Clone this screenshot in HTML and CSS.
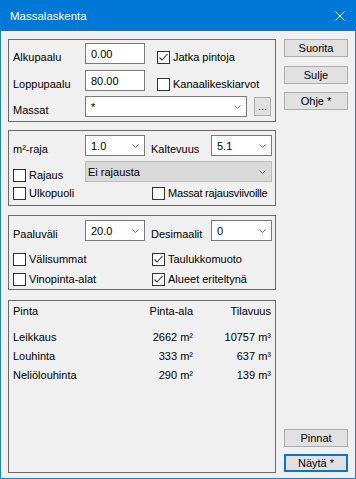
FILE: index.html
```html
<!DOCTYPE html>
<html lang="fi">
<head>
  <meta charset="UTF-8" />
  <meta name="viewport" content="width=device-width, initial-scale=1.0" />
  <title>Massalaskenta</title>
  <link rel="stylesheet" href="styles.css">
</head>
<body>
  <div class="window">
    <div class="titlebar">
      <span class="title">Massalaskenta</span>
      <svg class="close" width="10" height="10" viewBox="0 0 10 10"><path d="M0.5 0.5L9.5 9.5M9.5 0.5L0.5 9.5" stroke="#fff" stroke-width="1" fill="none"/></svg>
    </div>
    <div class="client">
      <div class="groups">
        <section class="group g1">
          <div class="row">
            <span class="lbl">Alkupaalu</span>
            <div class="edit w60">0.00</div>
            <label class="check ml12"><span class="box"><svg width="11" height="11" viewBox="0 0 11 11"><polyline points="1.5,5.5 4,8 9.5,2" /></svg></span>Jatka pintoja</label>
          </div>
          <div class="row mt6">
            <span class="lbl">Loppupaalu</span>
            <div class="edit w60">80.00</div>
            <label class="check ml12"><span class="box"></span>Kanaalikeskiarvot</label>
          </div>
          <div class="row mt5">
            <span class="lbl">Massat</span>
            <div class="combo w162"><span>*</span><svg class="arrow" width="7" height="4" viewBox="0 0 7 4"><polyline points="0.5,0.5 3.5,3.5 6.5,0.5" /></svg></div>
            <div class="dots">...</div>
          </div>
        </section>

        <section class="group g2">
          <div class="row">
            <span class="lbl">m²-raja</span>
            <div class="combo w60"><span>1.0</span><svg class="arrow" width="7" height="4" viewBox="0 0 7 4"><polyline points="0.5,0.5 3.5,3.5 6.5,0.5" /></svg></div>
            <span class="lbl lbl2">Kaltevuus</span>
            <div class="combo w61"><span>5.1</span><svg class="arrow" width="7" height="4" viewBox="0 0 7 4"><polyline points="0.5,0.5 3.5,3.5 6.5,0.5" /></svg></div>
          </div>
          <div class="row mt5">
            <label class="check col1"><span class="box"></span>Rajaus</label>
            <div class="combo disabled w187"><span>Ei rajausta</span><svg class="arrow" width="7" height="4" viewBox="0 0 7 4"><polyline points="0.5,0.5 3.5,3.5 6.5,0.5" /></svg></div>
          </div>
          <div class="row short mt5">
            <label class="check colwide"><span class="box"></span>Ulkopuoli</label>
            <label class="check tight"><span class="box"></span>Massat rajausviivoille</label>
          </div>
        </section>

        <section class="group g3">
          <div class="row">
            <span class="lbl">Paaluväli</span>
            <div class="combo w60"><span>20.0</span><svg class="arrow" width="7" height="4" viewBox="0 0 7 4"><polyline points="0.5,0.5 3.5,3.5 6.5,0.5" /></svg></div>
            <span class="lbl lbl2">Desimaalit</span>
            <div class="combo w61"><span>0</span><svg class="arrow" width="7" height="4" viewBox="0 0 7 4"><polyline points="0.5,0.5 3.5,3.5 6.5,0.5" /></svg></div>
          </div>
          <div class="row short mt12">
            <label class="check colwide"><span class="box"></span>Välisummat</label>
            <label class="check"><span class="box"><svg width="11" height="11" viewBox="0 0 11 11"><polyline points="1.5,5.5 4,8 9.5,2" /></svg></span>Taulukkomuoto</label>
          </div>
          <div class="row short mt7">
            <label class="check colwide"><span class="box"></span>Vinopinta-alat</label>
            <label class="check"><span class="box"><svg width="11" height="11" viewBox="0 0 11 11"><polyline points="1.5,5.5 4,8 9.5,2" /></svg></span>Alueet eriteltynä</label>
          </div>
        </section>

        <section class="group g4">
          <div class="table head">
            <span>Pinta</span>
            <span class="num">Pinta-ala</span>
            <span class="num">Tilavuus</span>
          </div>
          <div class="rows">
            <div class="table">
              <span>Leikkaus</span>
              <span class="num">2662 m²</span>
              <span class="num">10757 m³</span>
            </div>
            <div class="table">
              <span>Louhinta</span>
              <span class="num">333 m²</span>
              <span class="num">637 m³</span>
            </div>
            <div class="table">
              <span>Neliölouhinta</span>
              <span class="num">290 m²</span>
              <span class="num">139 m³</span>
            </div>
          </div>
        </section>
      </div>

      <div class="buttons">
        <button class="btn">Suorita</button>
        <button class="btn mt9">Sulje</button>
        <button class="btn mt8">Ohje *</button>
        <button class="btn bottom">Pinnat</button>
        <button class="btn default">Näytä *</button>
      </div>
    </div>
  </div>
</body>
</html>
```

FILE: styles.css
```css
body {
  margin: 0;
  font-family: "Liberation Sans", Arial, sans-serif;
  font-size: 11px;
  color: #000;
}
.window {
  width: 356px;
  height: 479px;
  display: flex;
  flex-direction: column;
  background-color: #f0f0f0;
}
.titlebar {
  height: 31px;
  flex-shrink: 0;
  background-color: #0078d7;
  color: white;
  display: flex;
  justify-content: space-between;
  align-items: center;
  padding: 0 11px 0 10px;
}
.title {
  font-size: 11.5px;
}
.client {
  flex: 1;
  display: flex;
  gap: 8px;
  padding: 8px 7px 0 7px;
  border: 1px solid #1a82d8;
  border-top: none;
}
.groups {
  width: 268px;
  display: flex;
  flex-direction: column;
}
.group {
  border: 1px solid #696969;
  box-sizing: border-box;
}
.g1 {
  height: 83px;
  padding: 3px 0 0 4px;
}
.g2 {
  height: 76px;
  margin-top: 8px;
  padding: 4px 0 0 4px;
}
.g3 {
  height: 75px;
  margin-top: 9px;
  padding: 4px 0 0 4px;
}
.g4 {
  height: 173px;
  margin-top: 10px;
  padding: 4px 4px 0 4px;
}
.row {
  display: flex;
  align-items: center;
  height: 21px;
}
.row.short {
  height: 13px;
}
.mt5 { margin-top: 5px; }
.mt6 { margin-top: 6px; }
.mt7 { margin-top: 7px; }
.mt8 { margin-top: 8px; }
.mt9 { margin-top: 9px; }
.mt12 { margin-top: 12px; }
.ml12 { margin-left: 12px; }
.lbl {
  width: 72px;
  line-height: 13px;
  align-self: flex-end;
}
.lbl2 {
  width: 60px;
  margin-left: 6px;
}
.edit, .combo {
  box-sizing: border-box;
  height: 21px;
  background-color: #fff;
  border: 1px solid #7a7a7a;
  padding: 0 5px 0 5px;
  display: flex;
  align-items: center;
}
.w60 { width: 60px; }
.w61 { width: 61px; }
.w162 { width: 162px; }
.w187 { width: 187px; }
.combo .arrow {
  margin-left: auto;
  fill: none;
  stroke: #707070;
  stroke-width: 1;
}
.combo.disabled {
  background-color: #dadada;
  border-color: #bcbcbc;
  padding-left: 2px;
}
.dots {
  box-sizing: border-box;
  width: 17px;
  height: 19px;
  margin-left: 7px;
  background-color: #e1e1e1;
  border: 1px solid #adadad;
  text-align: center;
  line-height: 16px;
}
.check {
  display: flex;
  align-items: center;
  gap: 3px;
  line-height: 13px;
  align-self: flex-end;
  white-space: nowrap;
}
.check.tight {
  letter-spacing: -0.2px;
}
.col1 {
  width: 72px;
}
.colwide {
  width: 139px;
}
.box {
  box-sizing: border-box;
  width: 13px;
  height: 13px;
  flex-shrink: 0;
  border: 1px solid #333;
  background-color: #fff;
  display: flex;
}
.box svg {
  fill: none;
  stroke: #333;
  stroke-width: 1.1;
}
.table {
  display: grid;
  grid-template-columns: 100px 80px 78px;
  line-height: 19px;
}
.table.head {
  line-height: 13px;
}
.rows {
  margin-top: 10px;
}
.num {
  text-align: right;
}
.buttons {
  width: 64px;
  display: flex;
  flex-direction: column;
  padding-bottom: 6px;
}
.btn {
  box-sizing: border-box;
  height: 18px;
  padding: 0;
  font-family: inherit;
  font-size: 11px;
  color: #000;
  background-color: #e1e1e1;
  border: 1px solid #adadad;
}
.btn.bottom {
  margin-top: auto;
}
.btn.default {
  margin-top: 7px;
  border: 2px solid #0078d7;
}
```
